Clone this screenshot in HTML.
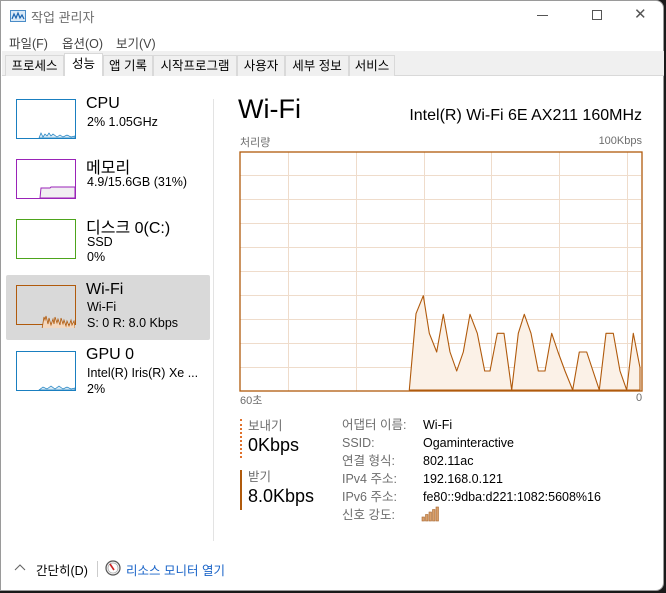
<!DOCTYPE html>
<html><head><meta charset="utf-8"><style>
*{margin:0;padding:0;box-sizing:border-box}
body{width:666px;height:593px;background:#1a1a1a;overflow:hidden;font-family:"Liberation Sans","Noto Sans CJK KR",sans-serif;color:#000}
#w{position:absolute;left:0;top:0;width:664px;height:591px;background:#fff;border:1px solid #9a9a9a;border-radius:0 8px 8px 0}
.a{position:absolute;white-space:nowrap}
.tabs{position:absolute;left:1px;top:50px;width:662px;height:25px;background:#f0f0f0;border-bottom:1px solid #d9d9d9}
.tab{position:absolute;top:4px;height:21px;font-size:12.5px;line-height:20px;text-align:center;border:1px solid #d9d9d9;border-bottom:none;background:#f0f0f0}
.thumb{position:absolute;left:15px;width:60px;height:40px;border:1px solid}
.g{color:#6d6d6d}
</style></head><body><div id="w">
<svg class="a" style="left:9px;top:9px" width="16" height="12"><rect x="0.5" y="0.5" width="15" height="11" fill="#dbeaf7" stroke="#4a8cc7"/><path d="M2 9 L4 4 L6 8 L8 3 L10 8 L12 5 L14 9" fill="none" stroke="#1b64b0" stroke-width="1.2"/></svg>
<div class="a g" style="left:30px;top:6px;font-size:13px">작업 관리자</div>
<div class="a" style="left:536px;top:14px;width:11px;height:1px;background:#555"></div>
<div class="a" style="left:591px;top:9px;width:10px;height:10px;border:1px solid #555"></div>
<div class="a" style="left:633px;top:4px;font-size:15px;color:#555">✕</div>
<div class="a" style="left:8px;top:32px;font-size:12.5px;color:#444">파일(F)</div>
<div class="a" style="left:61px;top:32px;font-size:12.5px;color:#444">옵션(O)</div>
<div class="a" style="left:115px;top:32px;font-size:12.5px;color:#444">보기(V)</div>
<div class="tabs">
<div class="tab" style="left:3px;width:59px">프로세스</div>
<div class="tab" style="left:62px;width:39px;top:2px;height:23px;background:#fff;line-height:20px">성능</div>
<div class="tab" style="left:101px;width:50px">앱 기록</div>
<div class="tab" style="left:151px;width:84px">시작프로그램</div>
<div class="tab" style="left:235px;width:48px">사용자</div>
<div class="tab" style="left:283px;width:64px">세부 정보</div>
<div class="tab" style="left:347px;width:46px">서비스</div>
</div>
<div class="a" style="left:5px;top:274px;width:204px;height:65px;background:#d9d9d9;border-radius:2px"></div>
<div class="thumb" style="top:98px;border-color:#1a7fc0"><svg width="58" height="38"><path d="M22 38 L24 33 L26 37 L28 34 L30 36 L32 33 L34 36 L36 34 L40 37 L43 35 L46 37 L50 35 L54 37 L58 36 L58 38Z" fill="#d6e9f5" stroke="#1a7fc0" stroke-width=".7"/></svg></div>
<div class="thumb" style="top:158px;border-color:#9a23b8"><svg width="58" height="38"><path d="M23 38 L24 28 L33 28 L34 27 L58 27 L58 38Z" fill="#f1eef2" stroke="#9a23b8"/></svg></div>
<div class="thumb" style="top:218px;border-color:#4da41c"></div>
<div class="thumb" style="top:284px;border-color:#b05a0c"><svg width="58" height="42"><path d="M25 43 L27 31 L28 34 L29 30 L31 38 L32 32 L34 39 L36 33 L37 38 L38 31 L40 37 L41 33 L43 39 L44 32 L46 38 L47 34 L49 40 L50 35 L52 40 L54 34 L55 39 L57 35 L58 40 L58 43Z" fill="#f3d8c0" stroke="#b05a0c" stroke-width=".8"/></svg></div>
<div class="thumb" style="top:350px;border-color:#1a7fc0"><svg width="58" height="38"><path d="M22 38 L26 35 L30 37 L34 34 L38 37 L42 34 L46 37 L50 35 L54 37 L58 36 L58 38Z" fill="#d6e9f5" stroke="#1a7fc0" stroke-width=".7"/></svg></div>
<div class="a" style="left:85px;top:94px;font-size:16px">CPU</div>
<div class="a" style="left:86px;top:114px;font-size:12.5px">2% 1.05GHz</div>
<div class="a" style="left:85px;top:153px;font-size:16px">메모리</div>
<div class="a" style="left:86px;top:174px;font-size:12.5px">4.9/15.6GB (31%)</div>
<div class="a" style="left:85px;top:213px;font-size:16px">디스크 0(C:)</div>
<div class="a" style="left:86px;top:234px;font-size:12.5px">SSD</div>
<div class="a" style="left:86px;top:249px;font-size:12.5px">0%</div>
<div class="a" style="left:85px;top:280px;font-size:16px">Wi-Fi</div>
<div class="a" style="left:86px;top:299px;font-size:12.5px">Wi-Fi</div>
<div class="a" style="left:86px;top:315px;font-size:12.5px">S: 0 R: 8.0 Kbps</div>
<div class="a" style="left:85px;top:345px;font-size:16px">GPU 0</div>
<div class="a" style="left:86px;top:365px;font-size:12.5px">Intel(R) Iris(R) Xe ...</div>
<div class="a" style="left:86px;top:381px;font-size:12.5px">2%</div>
<div class="a" style="left:212px;top:98px;width:1px;height:442px;background:#e3e3e3"></div>
<div class="a" style="left:237px;top:93px;font-size:27px">Wi-Fi</div>
<div class="a" style="left:641px;top:106px;font-size:16px;transform:translateX(-100%)">Intel(R) Wi-Fi 6E AX211 160MHz</div>
<div class="a g" style="left:239px;top:133px;font-size:11px">처리량</div>
<div class="a g" style="left:641px;top:134px;font-size:11px;transform:translateX(-100%)">100Kbps</div>
<svg class="a" style="left:238px;top:150px" width="404" height="241">
<g stroke="#efdccb" stroke-width="1">
<path d="M49.5 1V240M117.5 1V240M185.5 1V240M252.5 1V240M320.5 1V240M388.5 1V240"/>
<path d="M1 24.5H402M1 48.5H402M1 72.5H402M1 96.5H402M1 120.5H402M1 144.5H402M1 168.5H402M1 192.5H402M1 216.5H402"/>
</g>
<g transform="translate(-239,-150)">
<path d="M409.3 389 L416 312.7 L423.3 294.7 L429.3 332.3 L436.7 351 L443.3 313.3 L450 351 L456.7 370 L463.3 351 L470 313.3 L477.3 332.3 L484.7 370 L490 370 L497.3 332.3 L504 332.3 L511.7 389 L518.3 332.3 L524.3 313.3 L531 332.3 L538.3 370 L545 370 L551.7 332.3 L558 351 L565 370 L572.7 389 L579.3 351 L586.7 351 L599.3 389 L606 332.3 L613.3 332.3 L620 370 L626.7 389 L633.3 332.3 L640 366.7 L640 389Z" fill="#fbf1e7" stroke="#b05a0c" stroke-width="1.1" stroke-linejoin="round"/>
</g>
<rect x="1" y="1" width="402" height="239" fill="none" stroke="#b05a0c" stroke-width="1.3"/>
</svg>
<div class="a g" style="left:239px;top:391px;font-size:11px">60초</div>
<div class="a g" style="left:635px;top:391px;font-size:11px">0</div>
<div class="a" style="left:239px;top:418px;height:39px;border-left:2px dotted #e0712c"></div>
<div class="a g" style="left:247px;top:414px;font-size:12.5px">보내기</div>
<div class="a" style="left:247px;top:434px;font-size:18px">0Kbps</div>
<div class="a" style="left:239px;top:469px;width:2px;height:40px;background:#b05a0c"></div>
<div class="a g" style="left:247px;top:465px;font-size:12.5px">받기</div>
<div class="a" style="left:247px;top:485px;font-size:18px">8.0Kbps</div>
<div class="a g" style="left:341px;top:415px;font-size:12.5px;line-height:18px">어댑터 이름:<br>SSID:<br>연결 형식:<br>IPv4 주소:<br>IPv6 주소:<br>신호 강도:</div>
<div class="a" style="left:422px;top:415px;font-size:12.5px;line-height:18px">Wi-Fi<br>Ogaminteractive<br>802.11ac<br>192.168.0.121<br>fe80::9dba:d221:1082:5608%16</div>
<svg class="a" style="left:420px;top:505px" width="18" height="16"><g fill="#d9a06a" stroke="#a8662e" stroke-width=".6"><rect x="1" y="11" width="2.5" height="4"/><rect x="4.5" y="8.5" width="2.5" height="6.5"/><rect x="8" y="6" width="2.5" height="9"/><rect x="11.5" y="3.5" width="2.5" height="11.5"/><rect x="15" y="1" width="2.5" height="14"/></g></svg>
<svg class="a" style="left:13px;top:562px" width="12" height="8"><path d="M1 7 L6 2 L11 7" fill="none" stroke="#666" stroke-width="1.1"/></svg>
<div class="a" style="left:35px;top:559px;font-size:12.5px">간단히(D)</div>
<div class="a" style="left:96px;top:560px;width:1px;height:16px;background:#ccc"></div>
<svg class="a" style="left:104px;top:559px" width="16" height="16"><circle cx="8" cy="8" r="7" fill="#eee" stroke="#555" stroke-width="1.2"/><circle cx="8" cy="8" r="5" fill="#fff" stroke="#999" stroke-width=".6"/><path d="M5 4 L9 10" stroke="#c22" stroke-width="1.6"/></svg>
<div class="a" style="left:125px;top:559px;font-size:12.5px;color:#1a64c8">리소스 모니터 열기</div>
</div></body></html>
